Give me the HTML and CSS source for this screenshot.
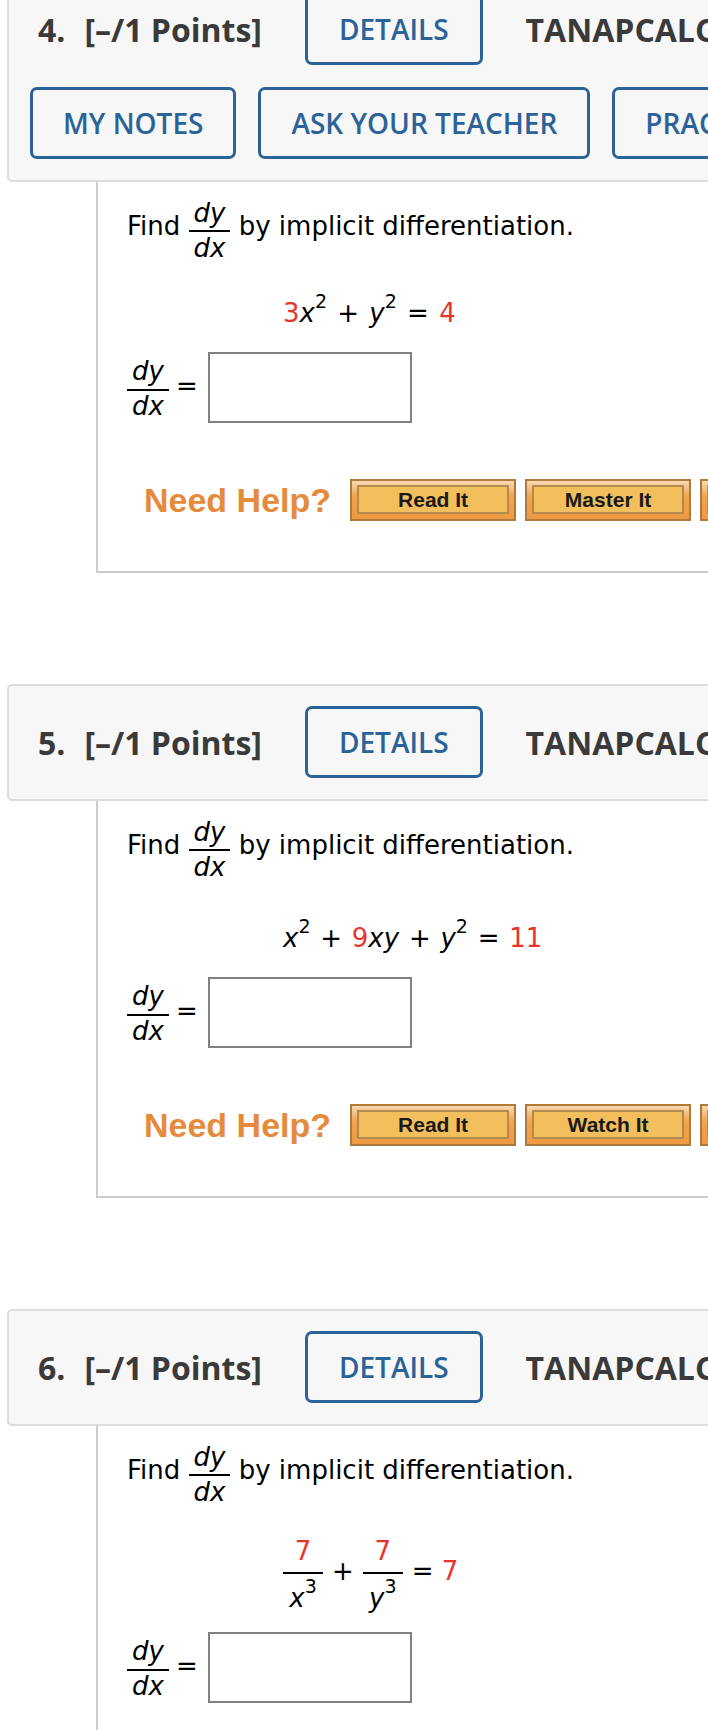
FILE: index.html
```html
<!DOCTYPE html>
<html>
<head>
<meta charset="utf-8">
<link rel="stylesheet" href="styles.css">
</head>
<body>
<div class="page">

<section class="q q4">
  <div class="qhead">
    <div class="hrow">
      <span class="title"><span class="qnum">4.</span>[–/1 Points]</span>
      <span class="btn details">DETAILS</span>
      <span class="code">TANAPCALC10 3.6.007.</span>
    </div>
    <div class="hrow tools">
      <span class="btn">MY NOTES</span>
      <span class="btn">ASK YOUR TEACHER</span>
      <span class="btn">PRACTICE ANOTHER</span>
    </div>
  </div>
  <div class="qbody">
    <p class="prompt">Find <span class="frac"><span class="num"><i>dy</i></span><span class="den"><i>dx</i></span></span> by implicit differentiation.</p>
    <p class="eq eq4"><span class="red">3</span><i>x</i><sup>2</sup> + <i>y</i><sup>2</sup> = <span class="red">4</span></p>
    <div class="ans">
      <span class="afrac"><span class="anum"><i>dy</i></span><span class="aden"><i>dx</i></span></span>
      <span class="equals">=</span>
      <span class="box"></span>
    </div>
    <div class="help">
      <span class="need">Need Help?</span>
      <span class="hbtn"><span class="hin">Read It</span></span>
      <span class="hbtn"><span class="hin">Master It</span></span>
      <span class="hbtn"><span class="hin">Chat About It</span></span>
    </div>
  </div>
</section>

<section class="q q5">
  <div class="qhead">
    <div class="hrow">
      <span class="title"><span class="qnum">5.</span>[–/1 Points]</span>
      <span class="btn details">DETAILS</span>
      <span class="code">TANAPCALC10 3.6.009.</span>
    </div>
  </div>
  <div class="qbody">
    <p class="prompt">Find <span class="frac"><span class="num"><i>dy</i></span><span class="den"><i>dx</i></span></span> by implicit differentiation.</p>
    <p class="eq eq5"><i>x</i><sup>2</sup> + <span class="red">9</span><i>xy</i> + <i>y</i><sup>2</sup> = <span class="red">11</span></p>
    <div class="ans">
      <span class="afrac"><span class="anum"><i>dy</i></span><span class="aden"><i>dx</i></span></span>
      <span class="equals">=</span>
      <span class="box"></span>
    </div>
    <div class="help">
      <span class="need">Need Help?</span>
      <span class="hbtn"><span class="hin">Read It</span></span>
      <span class="hbtn"><span class="hin">Watch It</span></span>
      <span class="hbtn"><span class="hin">Chat About It</span></span>
    </div>
  </div>
</section>

<section class="q q6">
  <div class="qhead">
    <div class="hrow">
      <span class="title"><span class="qnum">6.</span>[–/1 Points]</span>
      <span class="btn details">DETAILS</span>
      <span class="code">TANAPCALC10 3.6.011.</span>
    </div>
  </div>
  <div class="qbody">
    <p class="prompt">Find <span class="frac"><span class="num"><i>dy</i></span><span class="den"><i>dx</i></span></span> by implicit differentiation.</p>
    <div class="eq6">
      <span class="efrac"><span class="enum red">7</span><span class="eden"><i>x</i><sup>3</sup></span></span>
      <span class="op">+</span>
      <span class="efrac"><span class="enum red">7</span><span class="eden"><i>y</i><sup>3</sup></span></span>
      <span class="op">= <span class="red">7</span></span>
    </div>
    <div class="ans ans6">
      <span class="afrac"><span class="anum"><i>dy</i></span><span class="aden"><i>dx</i></span></span>
      <span class="equals">=</span>
      <span class="box"></span>
    </div>
    <div class="help">
      <span class="need">Need Help?</span>
      <span class="hbtn"><span class="hin">Read It</span></span>
    </div>
  </div>
</section>

</div>
</body>
</html>
```

FILE: styles.css
```css
html, body {
  margin: 0;
  padding: 0;
  background: #ffffff;
  overflow: hidden;
}
body {
  width: 708px;
  height: 1730px;
}
.page {
  margin-top: -29px;
  padding-left: 7px;
  width: 1300px;
}
.q {
  margin-bottom: 111px;
}
.qhead {
  background: #f7f7f7;
  border: 2px solid #dddddd;
  border-radius: 5px;
  padding: 20px 0 21px 21px;
  display: flex;
  flex-direction: column;
  gap: 22px;
  font-family: "Open Sans", sans-serif;
}
.hrow {
  display: flex;
  align-items: center;
  white-space: nowrap;
}
.tools {
  gap: 22px;
}
.tools .btn {
  padding: 0 30px;
}
.title {
  margin-left: 8px;
  font-weight: 700;
  font-size: 32px;
  color: #3a3a3a;
}
.qnum {
  margin-right: 19px;
}
.code {
  margin-left: 43px;
  font-weight: 700;
  font-size: 32px;
  color: #3a3a3a;
}
.btn {
  box-sizing: border-box;
  height: 72px;
  border: 3px solid #2b6398;
  border-radius: 7px;
  padding: 0 31px;
  display: inline-flex;
  align-items: center;
  font-weight: 600;
  font-size: 28px;
  color: #2b6398;
}
.details {
  margin-left: 43px;
}
.qbody {
  margin-left: 89px;
  border-left: 2px solid #cccccc;
  border-bottom: 2px solid #cccccc;
  padding: 18px 0 50px 29px;
  font-family: "DejaVu Sans", Verdana, sans-serif;
  font-size: 26px;
  color: #000000;
}
.prompt {
  margin: 0;
  line-height: 30px;
}
.frac {
  display: inline-block;
  vertical-align: -22px;
  text-align: center;
}
.num {
  display: block;
  line-height: 26px;
  padding: 0 5px 4px;
  border-bottom: 2px solid #000;
}
.den {
  display: block;
  line-height: 26px;
  padding-top: 3px;
}
.eq {
  margin: 0;
  padding-left: 156px;
  line-height: 30px;
  word-spacing: 2px;
}
.eq4 {
  padding-top: 37px;
}
.eq5 {
  padding-top: 43px;
  word-spacing: 1.5px;
}
.red {
  color: #e8352b;
}
sup {
  font-size: 19px;
  vertical-align: 14px;
  line-height: 0;
}
.ans {
  display: flex;
  align-items: center;
  margin-top: 24px;
}
.ans6 {
  margin-top: 21px;
}
.afrac {
  display: flex;
  flex-direction: column;
  align-items: center;
  width: 42px;
  margin-top: 2px;
}
.anum {
  line-height: 26px;
  padding-bottom: 5px;
  border-bottom: 2px solid #000;
  width: 42px;
  text-align: center;
}
.aden {
  line-height: 26px;
  padding-top: 2px;
}
.equals {
  line-height: 26px;
  margin-left: 7px;
  margin-bottom: 4px;
}
.box {
  box-sizing: border-box;
  width: 204px;
  height: 71px;
  border: 2px solid #808080;
  margin-left: 10px;
  background: #fff;
}
.help {
  display: flex;
  align-items: center;
  margin-top: 56px;
  margin-left: 17px;
  white-space: nowrap;
}
.need {
  font-family: "Liberation Sans", Arial, sans-serif;
  font-weight: 700;
  font-size: 34px;
  color: #e58b3b;
  margin-right: 19px;
}
.hbtn {
  box-sizing: border-box;
  flex: none;
  width: 166px;
  height: 42px;
  border: 2px solid #b07a3c;
  background: linear-gradient(#f9d9b3, #f2a450 40%, #ee9a42);
  padding: 4px 5px 5px;
  margin-right: 9px;
  display: inline-flex;
}
.hin {
  flex: 1;
  border: 2px solid #b38a50;
  background: #f3be5c;
  display: flex;
  align-items: center;
  justify-content: center;
  font-family: "Liberation Sans", Arial, sans-serif;
  font-weight: 700;
  font-size: 21px;
  color: #1a1a1a;
}
.eq6 {
  display: flex;
  align-items: center;
  padding-top: 33px;
  padding-left: 156px;
}
.efrac {
  display: flex;
  flex-direction: column;
  align-items: center;
  width: 40px;
}
.enum {
  width: 40px;
  text-align: center;
  line-height: 26px;
  padding-bottom: 8px;
  border-bottom: 2px solid #000;
}
.eden {
  line-height: 26px;
  padding-top: 11px;
}
.op {
  line-height: 26px;
  margin: 0 9px 7px;
}
```
